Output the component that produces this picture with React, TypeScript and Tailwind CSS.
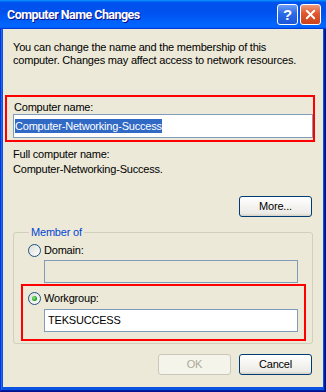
import { X } from "lucide-react";

// ─── Styles ──────────────────────────────────────────────────────────

const xpButton =
  "flex h-[21px] w-[73px] items-center justify-center rounded-[3px] border border-[#003c74] bg-[linear-gradient(180deg,#ffffff,#ecebe6_86%,#d6d0c5)] text-black";
const xpButtonDisabled =
  "flex h-[21px] w-[73px] items-center justify-center rounded-[3px] border border-[#c9c7ba] bg-[#f5f4ea] text-[#aca899]";
const redBox = "border-2 border-[#ff0000]";

// ─── Parts ───────────────────────────────────────────────────────────

function Radio({ checked }: { checked?: boolean }) {
  return (
    <span className="flex h-[13px] w-[13px] shrink-0 items-center justify-center rounded-full border border-[#1d5281] bg-[linear-gradient(135deg,#dcdcd7,#ffffff)]">
      {checked && (
        <span className="h-[5px] w-[5px] rounded-full bg-[radial-gradient(circle_at_40%_40%,#8ef08a,#21a121_60%,#0d7a0d)]" />
      )}
    </span>
  );
}

function TitleBar() {
  return (
    <div className="flex h-[29px] shrink-0 items-center bg-[linear-gradient(180deg,#0997ff,#0053ee_8%,#0050ee_40%,#0066ff_88%,#0066ff_93%,#005bff_95%,#003dd7_96%,#003dd7)] pl-[7px] pr-[5px]">
      <span className="flex-1 font-['Roboto',sans-serif] text-[12.5px] font-bold leading-[16px] tracking-[-0.55px] text-white [text-shadow:1px_1px_#0f1089]">
        Computer Name Changes
      </span>
      <div className="flex gap-[2px]">
        <button className="flex h-[21px] w-[21px] items-center justify-center rounded-[3px] border border-white bg-[linear-gradient(180deg,#6d9cf7,#2d6ae6_45%,#1b57d8)] text-[15px] font-bold leading-none text-white">
          ?
        </button>
        <button className="flex h-[21px] w-[21px] items-center justify-center rounded-[3px] border border-white bg-[linear-gradient(180deg,#ee9a7d,#e0582f_45%,#c9431d)] text-white">
          <X size={15} strokeWidth={3} />
        </button>
      </div>
    </div>
  );
}

// ─── App ─────────────────────────────────────────────────────────────

export default function App() {
  return (
    <div className="flex h-[392px] w-[326px] flex-col bg-[#0a52e2] font-['Liberation_Sans',Arial,sans-serif] shadow-[inset_-1px_-1px_#00138c,inset_1px_0_#0831d9,inset_-2px_-2px_#001ea0,inset_2px_0_#166aee]">
      <TitleBar />

      <div className="mx-[3px] mb-[5px] flex flex-1 flex-col bg-[#ece9d8] text-[11px] leading-[13px] tracking-[-0.2px] text-black">
        {/* Intro */}
        <p className="ml-[10px] mt-[12px] w-[300px]">
          You can change the name and the membership of this computer. Changes may affect access to network resources.
        </p>

        {/* Computer name */}
        <div className={`ml-[2px] mt-[28px] w-[310px] pb-[2px] pl-[6px] pt-[4px] ${redBox}`}>
          <div className="pl-[1px]">Computer name:</div>
          <div className="flex h-[24px] w-[300px] items-center border border-[#7f9db9] bg-white pl-[1px]">
            <span className="bg-[#316ac5] leading-[14px] text-white">Computer-Networking-Success</span>
          </div>
        </div>

        {/* Full name */}
        <div className="ml-[10px] mt-[6px]">Full computer name:</div>
        <div className="ml-[10px] mt-[2px]">Computer-Networking-Success.</div>

        <div className="mr-[11px] mt-[20px] flex justify-end">
          <button className={xpButton}>More...</button>
        </div>

        {/* Member of */}
        <fieldset className="mx-[10px] mt-[9px] rounded-[3px] border border-[#d0d0bf] pb-[2px] pl-[7px] pr-[6px] pt-[5px]">
          <legend className="ml-[8px] px-[2px] text-[#0046d5]">Member of</legend>

          <div className="pl-[7px]">
            <div className="flex items-center gap-[3px]">
              <Radio />
              <span>Domain:</span>
            </div>
            <div className="ml-[16px] mt-[3px] h-[23px] w-[254px] border border-[#7f9db9] bg-[#ece9d8]" />
          </div>

          <div className={`mt-[1px] pb-[7px] pl-[5px] pt-[6px] ${redBox}`}>
            <div className="flex items-center gap-[3px]">
              <Radio checked />
              <span>Workgroup:</span>
            </div>
            <div className="ml-[16px] mt-[4px] flex h-[23px] w-[254px] items-center border border-[#7f9db9] bg-white pl-[3px]">
              TEKSUCCESS
            </div>
          </div>
        </fieldset>

        {/* Buttons */}
        <div className="mr-[11px] mt-[10px] flex justify-end gap-[8px]">
          <button className={xpButtonDisabled}>OK</button>
          <button className={xpButton}>Cancel</button>
        </div>
      </div>
    </div>
  );
}
